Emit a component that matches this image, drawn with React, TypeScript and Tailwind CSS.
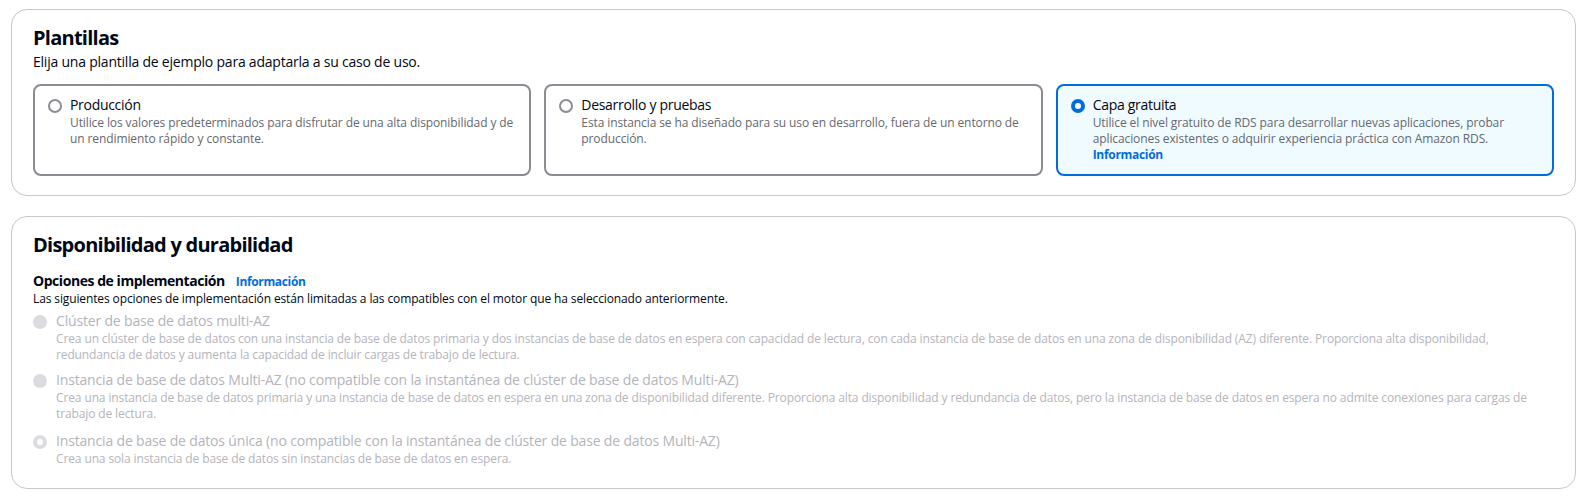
import React from "react"

const tiles = [
  {
    title: "Producción",
    desc: "Utilice los valores predeterminados para disfrutar de una alta disponibilidad y de un rendimiento rápido y constante.",
  },
  {
    title: "Desarrollo y pruebas",
    desc: "Esta instancia se ha diseñado para su uso en desarrollo, fuera de un entorno de producción.",
  },
  {
    title: "Capa gratuita",
    desc: "Utilice el nivel gratuito de RDS para desarrollar nuevas aplicaciones, probar aplicaciones existentes o adquirir experiencia práctica con Amazon RDS.",
    selected: true,
  },
]

const options = [
  {
    title: "Clúster de base de datos multi-AZ",
    desc: "Crea un clúster de base de datos con una instancia de base de datos primaria y dos instancias de base de datos en espera con capacidad de lectura, con cada instancia de base de datos en una zona de disponibilidad (AZ) diferente. Proporciona alta disponibilidad, redundancia de datos y aumenta la capacidad de incluir cargas de trabajo de lectura.",
  },
  {
    title: "Instancia de base de datos Multi-AZ (no compatible con la instantánea de clúster de base de datos Multi-AZ)",
    desc: "Crea una instancia de base de datos primaria y una instancia de base de datos en espera en una zona de disponibilidad diferente. Proporciona alta disponibilidad y redundancia de datos, pero la instancia de base de datos en espera no admite conexiones para cargas de trabajo de lectura.",
  },
  {
    title: "Instancia de base de datos única (no compatible con la instantánea de clúster de base de datos Multi-AZ)",
    desc: "Crea una sola instancia de base de datos sin instancias de base de datos en espera.",
    checked: true,
  },
]

function Radio({ selected }: { selected?: boolean }) {
  if (selected)
    return <span className="mt-[4px] h-[14px] w-[14px] shrink-0 rounded-full border-[4px] border-[#006ce0] bg-white" />
  return <span className="mt-[4px] h-[14px] w-[14px] shrink-0 rounded-full border-2 border-[#8c8c94] bg-white" />
}

function DisabledRadio({ checked }: { checked?: boolean }) {
  if (checked)
    return <span className="mt-[4px] h-[14px] w-[14px] shrink-0 rounded-full border-[4px] border-[#dcdce0] bg-white" />
  return <span className="mt-[4px] h-[14px] w-[14px] shrink-0 rounded-full bg-[#dcdce0]" />
}

export default function App() {
  return (
    <div className="min-h-[498px] bg-white pl-[11px] pr-[14px] pt-[9px] text-[#000716]" style={{ fontFamily: "'Open Sans', sans-serif" }}>
      <section className="rounded-2xl border border-[#c6c6cd] px-[21px] pt-[14px] pb-[19px]">
        <h2 className="text-[20px] font-bold leading-[28px] tracking-[-0.75px]">Plantillas</h2>
        <p className="text-[14px] leading-[20px] tracking-[-0.22px]">Elija una plantilla de ejemplo para adaptarla a su caso de uso.</p>
        <div className="mt-[12px] grid grid-cols-3 gap-[13px]">
          {tiles.map((t) => (
            <div
              key={t.title}
              className={
                t.selected
                  ? "flex h-[92px] gap-[8px] rounded-lg border-2 border-[#006ce0] bg-[#f0fbff] px-[13px] pt-[9px]"
                  : "flex h-[92px] gap-[8px] rounded-lg border-2 border-[#8c8c94] bg-white px-[13px] pt-[9px]"
              }
            >
              <Radio selected={t.selected} />
              <div className="min-w-0">
                <div className="text-[14px] leading-[20px] tracking-[-0.3px]">{t.title}</div>
                <div className="text-[12px] leading-[16px] tracking-[-0.1px] text-[#656871]">{t.desc}</div>
                {t.selected && <div className="text-[12px] font-bold leading-[16px] tracking-[-0.3px] text-[#006ce0]">Información</div>}
              </div>
            </div>
          ))}
        </div>
      </section>

      <section className="mt-[20px] rounded-2xl border border-[#c6c6cd] px-[21px] pt-[14px] pb-[21px]">
        <h2 className="text-[20px] font-bold leading-[28px] tracking-[-0.75px]">Disponibilidad y durabilidad</h2>
        <div className="mt-[13px] flex items-baseline gap-[11px]">
          <span className="text-[14px] font-bold leading-[18px] tracking-[-0.45px]">Opciones de implementación</span>
          <span className="text-[12px] font-bold leading-[18px] tracking-[-0.35px] text-[#006ce0]">Información</span>
        </div>
        <p className="text-[12px] leading-[16px] tracking-[-0.12px]">
          Las siguientes opciones de implementación están limitadas a las compatibles con el motor que ha seleccionado anteriormente.
        </p>
        <div className="mt-[4px] flex flex-col gap-[7px] pr-[24px]">
          {options.map((o) => (
            <div key={o.title} className={o.checked ? "mt-[2px] flex gap-[9px]" : "flex gap-[9px]"}>
              <DisabledRadio checked={o.checked} />
              <div className="min-w-0">
                <div className="text-[14px] leading-[20px] tracking-[-0.17px] text-[#b4b4bb]">{o.title}</div>
                <div className="text-[12px] leading-[16px] tracking-[-0.12px] text-[#b4b4bb]">{o.desc}</div>
              </div>
            </div>
          ))}
        </div>
      </section>
    </div>
  )
}
